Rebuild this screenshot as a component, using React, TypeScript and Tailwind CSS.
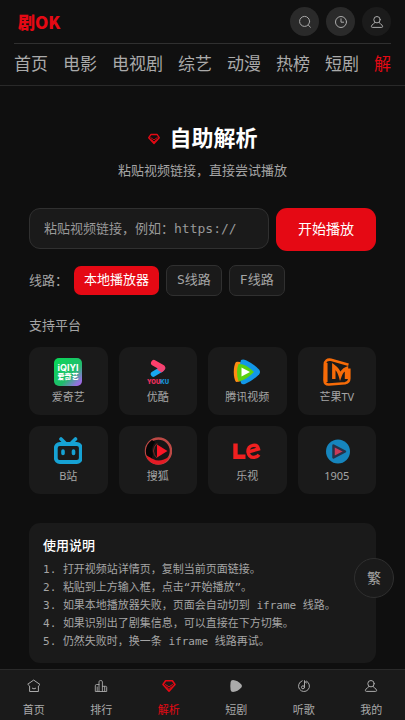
import React, { useState } from 'react';

const TABS = ['首页', '电影', '电视剧', '综艺', '动漫', '热榜', '短剧', '解析'];

const LINES = ['本地播放器', 'S线路', 'F线路'];

const STEPS = [
  '打开视频站详情页，复制当前页面链接。',
  '粘贴到上方输入框，点击“开始播放”。',
  '如果本地播放器失败，页面会自动切到 iframe 线路。',
  '如果识别出了剧集信息，可以直接在下方切集。',
  '仍然失败时，换一条 iframe 线路再试。',
];

const Icon: React.FC<{ className?: string; children: React.ReactNode }> = ({ className = 'size-4', children }) => (
  <svg
    viewBox="0 0 16 16"
    className={className}
    fill="none"
    stroke="currentColor"
    strokeLinecap="round"
    strokeLinejoin="round"
    aria-hidden="true"
  >
    {children}
  </svg>
);

const SearchIcon = () => (
  <Icon>
    <circle cx="7.6" cy="7.4" r="5" />
    <path d="M11.4 11.2 13.4 13.2" />
  </Icon>
);

const ClockIcon = () => (
  <Icon>
    <circle cx="8" cy="8" r="5.5" />
    <path d="M8 4.8V8.2H10.6" />
  </Icon>
);

const UserIcon = () => (
  <Icon>
    <circle cx="8" cy="5.7" r="3.2" />
    <path d="M6 8.5C6 9.8 2.8 9.8 2.4 12.4c0 .7.3 1 .9 1h9.400c.6 0 .9-.3.9-1C13.200 9.800 10 9.800 10 8.500" />
  </Icon>
);

const HomeIcon = () => (
  <Icon>
    <path d="M8 2.300 14 6.500 12.400 8V13.500H3.600V8L2 6.500Z" />
    <path d="M6.300 10.300Q8 11.700 9.700 10.300" />
  </Icon>
);

const RankIcon = () => (
  <Icon>
    <path d="M6 13.500V3.800Q6 2.500 7.700 2.500T9.400 3.800V13.500M6 6.500H3.600Q2.300 6.500 2.300 7.800V13.500H13.700V9.300Q13.700 8.300 12.500 8.300H9.400M4.200 9V13M11.700 8.500V13" strokeWidth="0.900" />
  </Icon>
);

const GemIcon: React.FC<{ className?: string }> = ({ className }) => (
  <Icon className={className}>
    <path d="M4.600 2.800H11.400L14 6.500 8 13.200 2 6.500Z" strokeWidth="1.600" />
    <path d="M4.300 6.600 6 7.500 8 9 10 7.500 11.700 6.600M5.500 8.800 8 11.500 10.500 8.800" />
  </Icon>
);

const PlayIcon = () => (
  <Icon>
    <path d="M2.600 4Q2.900 1.900 5 1.900 9.800 2.200 13.400 6.400 14.600 8 13.400 9.600 9.800 13.800 5 14.100 2.900 14.100 2.600 12 2 8 2.600 4Z" fill="currentColor" stroke="none" />
  </Icon>
);

const MusicIcon = () => (
  <Icon>
    <path d="M6.200 2.800A5.500 5.500 0 1 0 10.500 3.100" />
    <circle cx="7" cy="9.300" r="1.500" />
    <path d="M8.500 9.300V2.500Q8.800 4.400 10.500 5" />
  </Icon>
);

const Logo: React.FC<{ children: React.ReactNode }> = ({ children }) => (
  <svg viewBox="0 0 28 28" className="size-7" aria-hidden="true">{children}</svg>
);

const IqiyiLogo = () => (
  <Logo>
    <defs>
      <linearGradient id="iqiyi" x1="0" y1="0" x2="1" y2="1">
        <stop offset="0" stopColor="#08d957" />
        <stop offset="0.6" stopColor="#20bd6c" />
        <stop offset="0.85" stopColor="#8a78d8" />
        <stop offset="1" stopColor="#b45cf0" />
      </linearGradient>
    </defs>
    <rect width="28" height="28" rx="5" fill="url(#iqiyi)" />
    <text x="14" y="12.500" textAnchor="middle" fontSize="9" fontWeight="700" fill="#fff" className="font-['Inter',sans-serif]">iQIYI</text>
    <text x="14" y="21" textAnchor="middle" fontSize="7" fontWeight="900" fill="#fff">爱奇艺</text>
  </Logo>
);

const YoukuLogo = () => (
  <Logo>
    <path d="M9.500 16 17 11.500" stroke="#18a8f0" strokeWidth="5.500" strokeLinecap="round" />
    <path d="M10 5 18 9.500" stroke="#ff3f6c" strokeWidth="6" strokeLinecap="round" />
    <path d="M16 7 21.500 9.500Q21.500 12 17.500 14.500L13 11.500Z" fill="#f04474" />
    <text x="14" y="25.500" textAnchor="middle" fontSize="6" fontWeight="900" fill="#e82f5a" className="font-['Inter',sans-serif]">
      YOU<tspan fill="#168ed0">KU</tspan>
    </text>
  </Logo>
);

const TencentLogo = () => (
  <Logo>
    <path d="M3 4C0 8 0 20 3 24Q8 24 14 20V8Q8 3 3 4Z" fill="#ff8b12" />
    <path d="M8 2Q10 .8 13 2.200 21 6 26 11.500 28 14 26 16.500 20 22.500 12 26 9 27 8 25L5 14Z" fill="#1297e8" />
    <path d="M5.500 6Q12 5 21 14 12 23 5.500 23 2.500 14 5.500 6Z" fill="#5bd10f" />
    <path d="M8.500 9.500 17 14 8.500 18.500Z" fill="#fff" />
  </Logo>
);

const MangoLogo = () => (
  <Logo>
    <path d="M25.500 6.800 8 1.800Q2.200 .8 1.800 6.500L1.500 22Q1.500 26.800 6 26.500L22 25.200Q26.200 24.500 26.300 20.500V10.500" fill="none" stroke="#f76b08" strokeWidth="2.600" />
    <path d="M2.800 5V24" stroke="#f76b08" strokeWidth="3.500" />
    <path d="M10.800 21V8.300Q15.500 11.500 17.200 17.500 19 12.500 23.500 10.500V21" fill="none" stroke="#f76b08" strokeWidth="3.400" />
  </Logo>
);

const BiliLogo = () => (
  <Logo>
    <rect x="1.800" y="7" width="25" height="18" rx="4" fill="none" stroke="#16a2d4" strokeWidth="3.800" />
    <path d="M7 2 11 6M21.500 2 17.500 6M9 14V16.500M19.500 14V16.500" stroke="#16a2d4" strokeWidth="3.600" strokeLinecap="round" />
  </Logo>
);

const SohuLogo = () => (
  <Logo>
    <circle cx="14.500" cy="14" r="12.500" fill="#171515" />
    <circle cx="14.500" cy="14" r="12.500" fill="none" stroke="#bd4945" strokeWidth="2.500" />
    <path d="M8 3C0 8 0 20 7 24L9 17Q6 12 11 5Z" fill="#050505" />
    <path d="M2 18Q7 21 9 22 16 26 25.500 19.500 22 27.500 14 27.500 5 27.500 2 18Z" fill="#e51b25" />
    <path d="M13 7.500 23.500 14 13 20.500Z" fill="#fa1626" />
    <path d="M13 6.500Q9.500 10 9.500 14 9.500 18 13 21" fill="none" stroke="#8c2523" />
  </Logo>
);

const LeLogo = () => (
  <Logo>
    <path d="M2.500 6.500V19.800H12.500" fill="none" stroke="#f02020" strokeWidth="4.400" />
    <path d="M15 15 25.500 12Q24.500 7.500 20 8.300 14.800 9.300 15 15 16 21 21.500 20.300 24.500 20 26 17.800" fill="none" stroke="#f02020" strokeWidth="3.400" />
  </Logo>
);

const M1905Logo = () => (
  <Logo>
    <circle cx="15" cy="14.500" r="12" fill="#1685bd" />
    <path d="M10.500 8.500 22 14.500 10.500 20.500Z" fill="#c93b58" stroke="#263248" strokeWidth="2.500" strokeLinejoin="round" />
  </Logo>
);

const PLATFORMS = [
  { name: '爱奇艺', Logo: IqiyiLogo },
  { name: '优酷', Logo: YoukuLogo },
  { name: '腾讯视频', Logo: TencentLogo },
  { name: '芒果TV', Logo: MangoLogo },
  { name: 'B站', Logo: BiliLogo },
  { name: '搜狐', Logo: SohuLogo },
  { name: '乐视', Logo: LeLogo },
  { name: '1905', Logo: M1905Logo },
];

const BOTTOM = [
  { name: '首页', Icon: HomeIcon },
  { name: '排行', Icon: RankIcon },
  { name: '解析', Icon: GemIcon },
  { name: '短剧', Icon: PlayIcon },
  { name: '听歌', Icon: MusicIcon },
  { name: '我的', Icon: UserIcon },
];

const Header: React.FC = () => (
  <header className="border-b border-[#292929] bg-[#101010] px-3.5">
    <div className="flex items-center justify-between border-b border-[#303030] py-[7px]">
      <a href="#" className="pl-1 text-[17px] font-black leading-7 text-[#e50914] font-['Noto_Sans_CJK_SC',sans-serif]">剧OK</a>
      <div className="flex gap-[7px] text-[#aaa]">
        <button aria-label="搜索" className="flex size-[29px] items-center justify-center rounded-full bg-[#2a2a2a]"><SearchIcon /></button>
        <button aria-label="历史" className="flex size-[29px] items-center justify-center rounded-full bg-[#2a2a2a]"><ClockIcon /></button>
        <button aria-label="我的" className="flex size-[29px] items-center justify-center rounded-full bg-[#1b1b1b]"><UserIcon /></button>
      </div>
    </div>
    <nav className="flex h-[41px] items-center gap-[15px] overflow-x-auto whitespace-nowrap pb-0.5 text-[17px] leading-6 text-[#aaa] [scrollbar-width:none]">
      {TABS.map((tab) => (
        <a key={tab} href="#" className={tab === '解析' ? 'text-[#e50914]' : ''}>{tab}</a>
      ))}
    </nav>
  </header>
);

const BottomNav: React.FC = () => (
  <nav className="fixed inset-x-0 bottom-0 grid h-[51px] grid-cols-6 border-t border-[#2a2a2a] bg-[#1a1a1a]">
    {BOTTOM.map(({ name, Icon: ItemIcon }) => (
      <a
        key={name}
        href="#"
        className={`flex flex-col items-center gap-[9px] pt-2 text-[11px] leading-4 ${name === '解析' ? 'text-[#e50914]' : 'text-[#aaa]'}`}
      >
        <ItemIcon />
        {name}
      </a>
    ))}
  </nav>
);

export default function App() {
  const [line, setLine] = useState(LINES[0]);
  const [url, setUrl] = useState('');

  return (
    <div className="min-h-screen bg-[#0f0f0f] pb-14 text-[#a5a5a5] font-['DejaVu_Sans_Mono','Noto_Sans_CJK_SC',monospace]">
      <Header />
      <main className="px-[29px] pt-[37px]">
        <div className="flex items-center justify-center gap-2">
          <GemIcon className="size-[14px] text-[#e50914]" />
          <h1 className="text-[22px] font-bold leading-8 text-white">自助解析</h1>
        </div>
        <p className="mt-1 text-center text-[13px] leading-6">粘贴视频链接，直接尝试播放</p>

        <form className="mt-[25px] flex items-start gap-[7px]" onSubmit={(e) => e.preventDefault()}>
          <input
            aria-label="视频链接"
            value={url}
            onChange={(e) => setUrl(e.target.value)}
            placeholder="粘贴视频链接，例如：https://"
            className="h-[41px] min-w-0 flex-1 rounded-[11px] border border-[#303030] bg-[#1a1a1a] px-3.5 text-[13px] text-white outline-none placeholder:text-[#999]"
          />
          <button className="h-[43px] rounded-[11px] bg-[#e50914] px-[22px] pb-0.5 text-sm text-white">开始播放</button>
        </form>

        <div className="mt-3.5 flex items-center gap-[7px] text-[13px]">
          <span className="w-[38px] whitespace-nowrap">线路：</span>
          {LINES.map((item) => (
            <button
              key={item}
              onClick={() => setLine(item)}
              className={`rounded-[7px] px-2.5 pb-0.5 ${
                item === line ? 'h-[29px] bg-[#e50914] text-white' : 'h-[31px] border border-[#303030] bg-[#1a1a1a]'
              }`}
            >
              {item}
            </button>
          ))}
        </div>

        <h2 className="mt-5 text-[13px] leading-5">支持平台</h2>
        <div className="mt-[11px] grid grid-cols-4 gap-[11px]">
          {PLATFORMS.map(({ name, Logo: PlatformLogo }) => (
            <a
              key={name}
              href="#"
              className="flex h-[68px] flex-col items-center gap-[3px] rounded-[11px] bg-[#1a1a1a] pt-[11px] text-[11px] leading-4 font-['Noto_Sans','Noto_Sans_CJK_SC',sans-serif]"
            >
              <PlatformLogo />
              {name}
            </a>
          ))}
        </div>

        <section className="mt-[29px] rounded-[11px] bg-[#1a1a1a] p-3.5 pb-3">
          <h3 className="mb-1.5 text-[13px] font-medium leading-[18px] text-white">使用说明</h3>
          <ol className="text-[11px] leading-[18px]">
            {STEPS.map((step, i) => (
              <li key={step}>{i + 1}. {step}</li>
            ))}
          </ol>
        </section>
      </main>

      <button className="fixed bottom-[122px] right-[11px] size-10 rounded-full border border-[#303030] bg-[#1a1a1a] text-sm">繁</button>
      <BottomNav />
    </div>
  );
}
